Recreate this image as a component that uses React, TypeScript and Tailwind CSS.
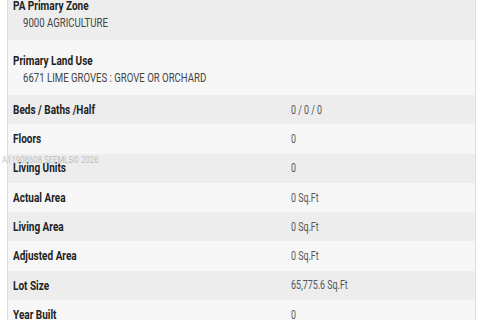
const font = { fontFamily: '"Roboto", "Liberation Sans", sans-serif' }

const stacked = [
  { label: 'PA Primary Zone', value: '9000 AGRICULTURE' },
  { label: 'Primary Land Use', value: '6671 LIME GROVES : GROVE OR ORCHARD' },
]

const rows = [
  { label: 'Beds / Baths /Half', value: '0 / 0 / 0' },
  { label: 'Floors', value: '0' },
  { label: 'Living Units', value: '0' },
  { label: 'Actual Area', value: '0 Sq.Ft' },
  { label: 'Living Area', value: '0 Sq.Ft' },
  { label: 'Adjusted Area', value: '0 Sq.Ft' },
  { label: 'Lot Size', value: '65,775.6 Sq.Ft' },
  { label: 'Year Built', value: '0' },
]

// condensed face: squeeze Roboto horizontally
const label = 'origin-left scale-x-[0.77] whitespace-nowrap text-[13px] font-bold text-[#222]'

export default function App() {
  return (
    <div className="relative w-[480px] h-[320px] overflow-hidden bg-white" style={font}>
      <div className="ml-[7px] mr-[4px] -mt-[15px] border-x border-[#dedede]">
        {stacked.map((r, i) => (
          <div
            key={r.label}
            className={`h-[55px] pt-[13px] pl-[5px] flex flex-col items-start ${i % 2 === 0 ? 'bg-[#ededed]' : 'bg-[#f7f7f7]'}`}
          >
            <span className={`${label} leading-[15px]`}>{r.label}</span>
            <span className="ml-[10px] mt-[3px] origin-left scale-x-[0.8] whitespace-nowrap text-[12px] leading-[14px] text-[#444]">
              {r.value}
            </span>
          </div>
        ))}
        {rows.map((r, i) => (
          <div
            key={r.label}
            className={`h-[29.3px] flex items-center ${i % 2 === 0 ? 'bg-[#ededed]' : 'bg-[#f7f7f7]'}`}
          >
            <div className="w-[283px] pl-[5px] flex">
              <span className={label}>{r.label}</span>
            </div>
            <span className="origin-left scale-x-[0.74] whitespace-nowrap text-[12px] text-[#555]">
              {r.value}
            </span>
          </div>
        ))}
      </div>
      {/* listing watermark */}
      <div className="absolute left-[2px] top-[154px] origin-left scale-x-[0.82] whitespace-nowrap text-[9.5px] leading-[12px] text-[#bdbdbd]">
        A11908608 SEFMLS© 2026
      </div>
    </div>
  )
}
